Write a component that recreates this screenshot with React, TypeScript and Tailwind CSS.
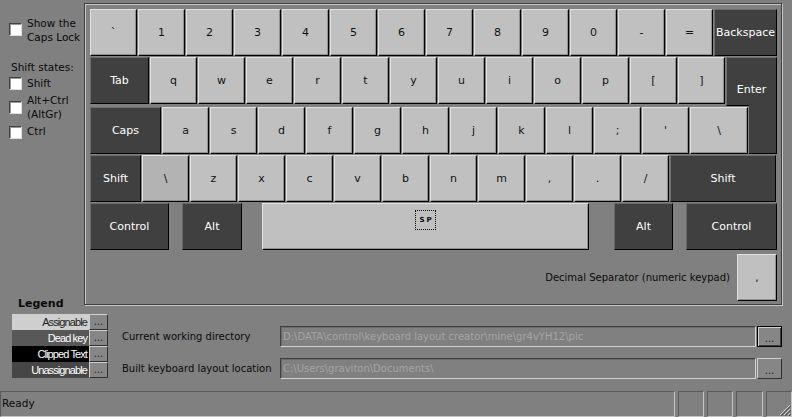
import React from 'react';

type K = { label: string; w: string; dark?: boolean; cls?: string };

const lightKey =
  'bg-[#c0c0c0] text-[#111] border-t-[#e2e2e2] border-l-[#e2e2e2] shadow-[inset_-1px_-1px_0_#8e8e8e]';
const darkKey = 'bg-[#404040] text-white border-t-[#6c6c6c] border-l-[#6c6c6c]';

function Key({ label, w, dark, cls = '' }: K) {
  return (
    <div
      className={`flex h-[47px] shrink-0 items-center justify-center border border-r-black border-b-black pt-[2px] text-[11px] ${w} ${
        dark ? darkKey : lightKey
      } ${cls}`}
    >
      {label}
    </div>
  );
}

const std = 'w-[47px]';
const row1 = ['`', '1', '2', '3', '4', '5', '6', '7', '8', '9', '0', '-', '='];
const row2 = ['q', 'w', 'e', 'r', 't', 'y', 'u', 'i', 'o', 'p', '[', ']'];
const row3 = ['a', 's', 'd', 'f', 'g', 'h', 'j', 'k', 'l', ';', "'"];
const row4 = ['z', 'x', 'c', 'v', 'b', 'n', 'm', ',', '.', '/'];

function Check() {
  return (
    <span className="block h-[13px] w-[13px] shrink-0 border border-t-[#404040] border-l-[#404040] border-r-[#dedede] border-b-[#dedede] bg-white shadow-[inset_1px_1px_0_#9a9a9a]" />
  );
}

function Dots({ focus }: { focus?: boolean }) {
  return (
    <div
      className={`flex w-full shrink-0 items-end justify-center border bg-[#868686] pb-[2px] text-[10px] leading-none text-[#222] ${
        focus
          ? 'border-black shadow-[inset_1px_1px_0_#d0d0d0,inset_-1px_-1px_0_#404040]'
          : 'border-t-[#d0d0d0] border-l-[#d0d0d0] border-r-[#303030] border-b-[#303030]'
      }`}
    >
      ...
    </div>
  );
}

const legend = [
  { label: 'Assignable', cls: 'bg-[#cfcfcf] text-[#222]' },
  { label: 'Dead key', cls: 'bg-[#585858] text-white' },
  { label: 'Clipped Text', cls: 'bg-black text-white' },
  { label: 'Unassignable', cls: 'bg-[#464646] text-white' },
];

export default function App() {
  return (
    <div className="flex h-[417px] w-[792px] flex-col overflow-hidden bg-[#808080] font-['DejaVu_Sans',sans-serif] text-[10px] text-[#0a0a0a]">
      <div className="flex h-[390px]">
        {/* left options column */}
        <aside className="flex w-[84px] shrink-0 flex-col">
          <div className="flex gap-[5px] pl-[9px] pt-[16px]">
            <span className="mt-[7px]">
              <Check />
            </span>
            <span className="text-[10.5px] leading-[14px]">
              Show the
              <br />
              Caps Lock
            </span>
          </div>
          <div className="mt-[16px] pl-[11px] text-[10.5px] leading-[14px]">Shift states:</div>
          <div className="mt-[3px] flex h-[13px] items-center gap-[5px] pl-[9px] text-[10.5px]">
            <Check />
            <span>Shift</span>
          </div>
          <div className="mt-[3px] flex items-center gap-[5px] pl-[9px] text-[10.5px]">
            <Check />
            <span className="leading-[14px]">
              Alt+Ctrl
              <br />
              (AltGr)
            </span>
          </div>
          <div className="mt-[4px] flex h-[14px] items-center gap-[5px] pl-[9px] text-[10.5px]">
            <Check />
            <span>Ctrl</span>
          </div>

          <div className="mt-[158px] pl-[18px] text-[11px] font-bold leading-[14px]">Legend</div>
          <div className="mt-[3px] flex flex-col pl-[12px]">
            {legend.map((l) => (
              <div key={l.label} className="flex h-[16px]">
                <div
                  className={`flex w-[77px] shrink-0 items-center justify-end overflow-hidden whitespace-nowrap pr-[2px] font-['Liberation_Sans',sans-serif] text-[11px] tracking-[-0.9px] ${l.cls}`}
                >
                  {l.label}
                </div>
                <div className="flex h-[16px] w-[19px] shrink-0">
                  <Dots />
                </div>
              </div>
            ))}
          </div>
        </aside>

        {/* main column */}
        <main className="flex flex-col">
          <div className="mt-[3px] h-[302px] w-[698px] border border-[#404040] pl-[5px] pt-[5px] shadow-[inset_1px_1px_0_#c8c8c8,1px_1px_0_#c8c8c8]">
            <div className="flex w-[687px] flex-col gap-px">
              <div className="flex gap-px">
                {row1.map((k) => (
                  <Key key={k} label={k} w={std} />
                ))}
                <Key label="Backspace" w="w-[63px]" dark />
              </div>
              <div className="flex items-start gap-px">
                <Key label="Tab" w="w-[59px]" dark />
                {row2.map((k) => (
                  <Key key={k} label={k} w={std} />
                ))}
                <div className="flex h-[49px] w-[51px] shrink-0 justify-center border border-b-black border-r-black border-t-[#6c6c6c] border-l-[#6c6c6c] bg-[#404040] pt-[25px] text-[11px] leading-[14px] text-white">
                  Enter
                </div>
              </div>
              <div className="flex items-start gap-px">
                <Key label="Caps" w="w-[71px]" dark />
                {row3.map((k) => (
                  <Key key={k} label={k} w={std} />
                ))}
                <Key label="\" w="w-[58px]" />
                <div className="-mt-[2px] h-[49px] w-[28px] shrink-0 border-r border-b border-r-black border-b-black bg-[#404040]" />
              </div>
              <div className="flex gap-px">
                <Key label="Shift" w="w-[51px]" dark />
                <Key label="\" w={std} cls="!bg-[#b3b3b3]" />
                {row4.map((k) => (
                  <Key key={k} label={k} w={std} />
                ))}
                <Key label="Shift" w="w-[106px]" dark />
              </div>
              <div className="flex">
                <Key label="Control" w="w-[79px]" dark />
                <Key label="Alt" w="w-[60px]" dark cls="ml-[13px]" />
                <div className="ml-[20px] flex h-[47px] w-[327px] items-center justify-center border border-r-black border-b-black border-t-[#e2e2e2] border-l-[#e2e2e2] bg-[#c0c0c0] shadow-[inset_-1px_-1px_0_#8e8e8e]">
                  <span className="mb-[13px] flex h-[20px] w-[21px] items-center justify-center border border-dotted border-black pl-[2px] text-[7px] font-bold tracking-[2px]">
                    SP
                  </span>
                </div>
                <Key label="Alt" w="w-[59px]" dark cls="ml-[25px]" />
                <Key label="Control" w="w-[91px]" dark cls="ml-[13px]" />
              </div>
            </div>
            <div className="mt-[4px] flex w-[687px] items-center justify-end gap-[7px]">
              <span>Decimal Separator (numeric keypad)</span>
              <Key label="," w="w-[40px]" />
            </div>
          </div>

          <div className="mt-[21px] flex flex-col gap-[11px] pl-[38px]">
            {[
              ['Current working directory', 'D:\\DATA\\control\\keyboard layout creator\\mine\\gr4vYH12\\pic', true],
              ['Built keyboard layout location', 'C:\\Users\\graviton\\Documents\\', false],
            ].map(([label, value, focus]) => (
              <div key={label as string} className="flex h-[21px] items-stretch">
                <div className="flex w-[158px] items-center">{label}</div>
                <div className="flex w-[476px] items-center border border-t-[#404040] border-l-[#404040] border-r-[#d4d4d4] border-b-[#d4d4d4] pl-[2px] text-[#a4a4a4] shadow-[inset_1px_1px_0_#6a6a6a]">
                  {value}
                </div>
                <div className="ml-px flex w-[25px]">
                  <Dots focus={focus as boolean} />
                </div>
              </div>
            ))}
          </div>
        </main>
      </div>

      {/* status bar */}
      <footer className="flex h-[27px] gap-[3px] pt-[1px]">
        <div className="flex w-[675px] items-center border border-t-[#5a5a5a] border-l-[#5a5a5a] border-r-[#c4c4c4] border-b-[#c4c4c4] pl-[1px] text-[10.5px]">
          Ready
        </div>
        <div className="w-[26px] border border-t-[#5a5a5a] border-l-[#5a5a5a] border-r-[#c4c4c4] border-b-[#c4c4c4]" />
        <div className="w-[26px] border border-t-[#5a5a5a] border-l-[#5a5a5a] border-r-[#c4c4c4] border-b-[#c4c4c4]" />
        <div className="w-[27px] border border-t-[#5a5a5a] border-l-[#5a5a5a] border-r-[#c4c4c4] border-b-[#c4c4c4]" />
        <div className="relative flex-1 border border-t-[#5a5a5a] border-l-[#5a5a5a] border-r-[#c4c4c4] border-b-[#c4c4c4]">
          <svg className="absolute right-0 bottom-0" width="12" height="12" viewBox="0 0 12 12">
            <path d="M11 1L1 11M11 5L5 11M11 9L9 11" stroke="#d0d0d0" strokeWidth="1" />
            <path d="M12 2L2 12M12 6L6 12M12 10L10 12" stroke="#505050" strokeWidth="1" />
          </svg>
        </div>
      </footer>
    </div>
  );
}
